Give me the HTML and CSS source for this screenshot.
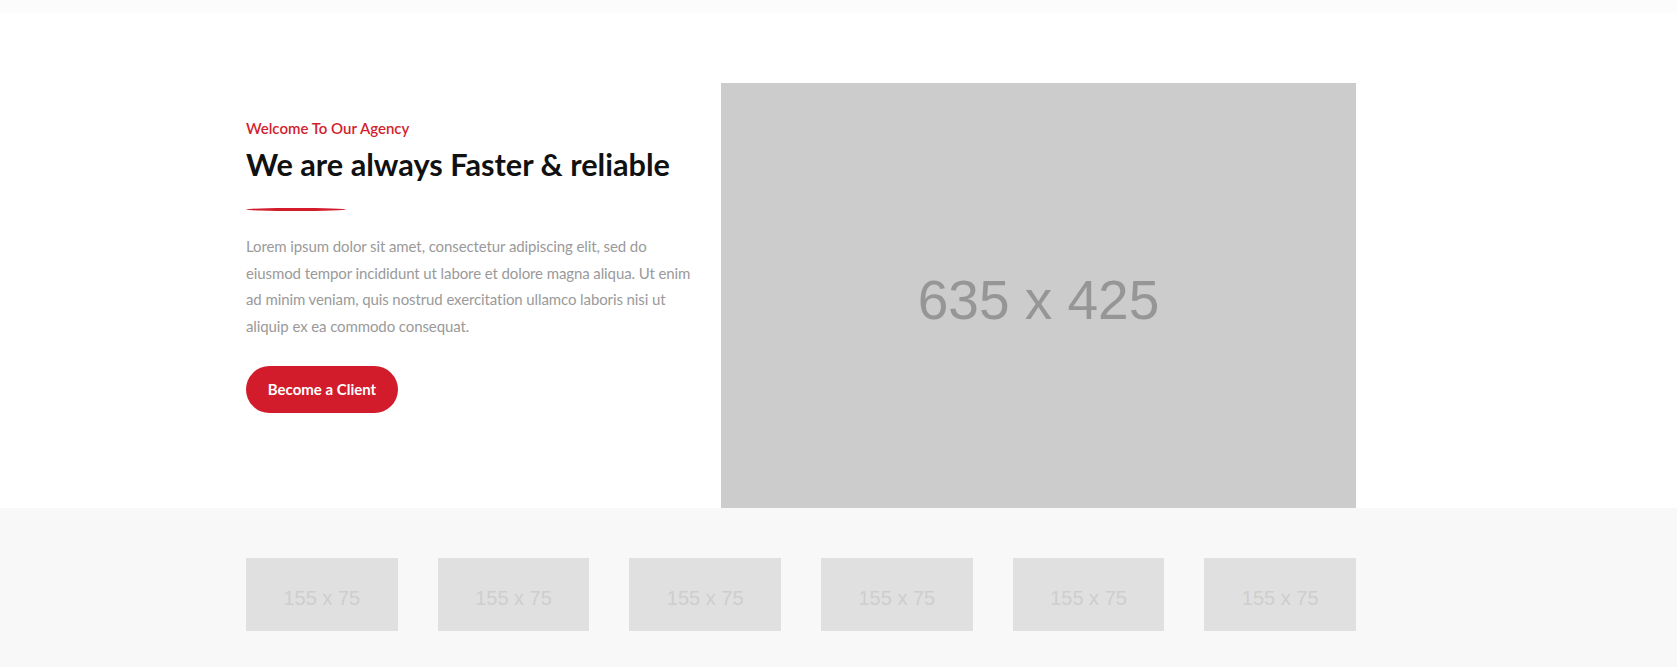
FILE: index.html
```html
<!DOCTYPE html>
<html lang="en">
<head>
<meta charset="utf-8">
<title>Agency</title>
<link rel="stylesheet" href="styles.css">
</head>
<body>
<div class="topbar"></div>
<section class="hero">
  <div class="container hero-row">
    <div class="hero-text">
      <p class="eyebrow">Welcome To Our Agency</p>
      <h1 class="title">We are always Faster &amp; reliable</h1>
      <div class="divider"></div>
      <p class="lead">Lorem ipsum dolor sit amet, consectetur adipiscing elit, sed do eiusmod tempor incididunt ut labore et dolore magna aliqua. Ut enim ad minim veniam, quis nostrud exercitation ullamco laboris nisi ut aliquip ex ea commodo consequat.</p>
      <a class="btn" href="#">Become a Client</a>
    </div>
    <div class="hero-img"><span>635 x 425</span></div>
  </div>
</section>
<section class="clients">
  <div class="container clients-row">
    <div class="logo"><span>155 x 75</span></div>
    <div class="logo"><span>155 x 75</span></div>
    <div class="logo"><span>155 x 75</span></div>
    <div class="logo"><span>155 x 75</span></div>
    <div class="logo"><span>155 x 75</span></div>
    <div class="logo"><span>155 x 75</span></div>
  </div>
</section>
</body>
</html>
```
FILE: styles.css
```css
* { box-sizing: border-box; }
html, body { margin: 0; padding: 0; background: #fff; }
body { font-family: Lato, "Open Sans", sans-serif; }

.topbar { height: 13px; background: #fcfcfc; }

.container { width: 1110px; margin-left: 246px; }

.hero { padding-top: 70px; }
.hero-row { display: flex; }
.hero-text { width: 475px; padding-right: 22px; padding-top: 35px; }

.eyebrow {
  margin: 0;
  color: #d21f2e;
  font-size: 15px;
  font-weight: 600;
  line-height: 20px;
}
.title {
  margin: 8px 0 0;
  color: #111;
  font-size: 30.7px;
  font-weight: 700;
  line-height: 38px;
}
.divider {
  margin-top: 24px;
  width: 100px;
  height: 3px;
  background: #d31c2b;
  border-radius: 50%;
}
.lead {
  margin: 22px 0 0;
  color: #9a9a9a;
  font-size: 15px;
  letter-spacing: -0.1px;
  line-height: 26.7px;
}
.btn {
  display: inline-flex;
  align-items: center;
  justify-content: center;
  margin-top: 26px;
  width: 152px;
  height: 47px;
  border-radius: 24px;
  background: #d31c2b;
  color: #fff;
  font-size: 15px;
  font-weight: 700;
  text-decoration: none;
}

.hero-img {
  width: 635px;
  height: 425px;
  padding-top: 9px;
  background: #cccccc;
  display: flex;
  align-items: center;
  justify-content: center;
  font-family: "Liberation Sans", Arial, sans-serif;
  font-size: 55px;
  color: #969696;
}

.clients { background: #f8f8f8; padding: 50px 0 40px; }
.clients-row { display: flex; gap: 40px; }
.logo {
  flex: 1 1 0;
  height: 73px;
  padding-top: 8px;
  background: #e0e0e0;
  display: flex;
  align-items: center;
  justify-content: center;
  font-family: "Liberation Sans", Arial, sans-serif;
  font-size: 20px;
  color: #cecece;
}
```
